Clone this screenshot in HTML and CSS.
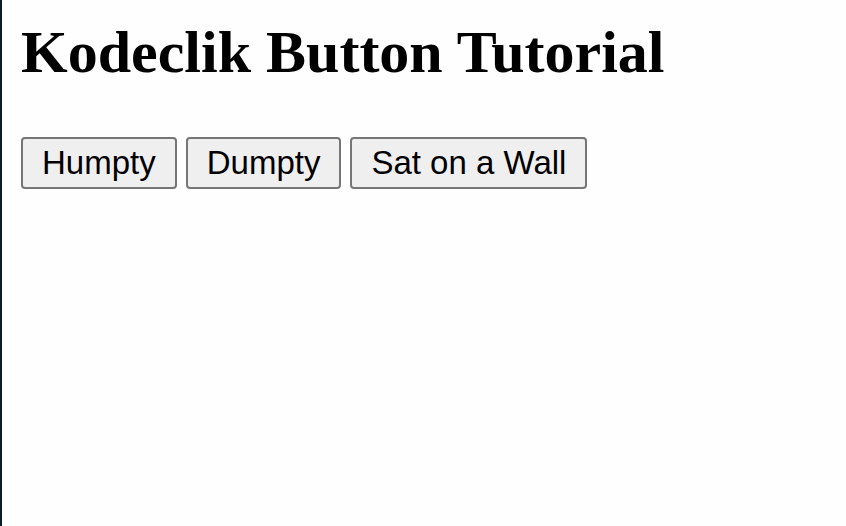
FILE: index.html
```html
<!DOCTYPE html>
<html>
<head>
<meta charset="utf-8">
<link rel="stylesheet" href="styles.css">
</head>
<body>
<div class="page">
  <h1 class="title">Kodeclik Button Tutorial</h1>
  <div class="buttons">
    <button class="btn">Humpty</button>
    <button class="btn">Dumpty</button>
    <button class="btn">Sat on a Wall</button>
  </div>
</div>
</body>
</html>
```
FILE: styles.css
```css
html, body {
  margin: 0;
  padding: 0;
  height: 100%;
  background: #fefefe;
}
.page {
  box-sizing: border-box;
  height: 100%;
  border-left: 2px solid #0d1b2b;
  padding: 19px 0 0 19px;
}
.title {
  font-family: "Liberation Serif", "Times New Roman", serif;
  font-weight: bold;
  font-size: 60px;
  line-height: 66px;
  margin: 0 0 52px 0;
  color: #000;
}
.buttons {
  display: flex;
  gap: 9px;
}
.btn {
  font-family: "Liberation Sans", Arial, sans-serif;
  font-size: 33px;
  line-height: 38px;
  padding: 5px 19px;
  border: 2px solid #767676;
  border-radius: 4px;
  background: #efefef;
  color: #000;
  margin: 0;
}
```
